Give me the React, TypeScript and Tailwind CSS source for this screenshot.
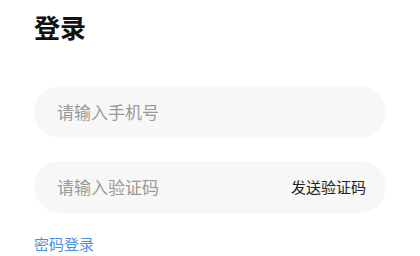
import React from "react";

const FONT = '"Noto Sans CJK SC", "Noto Sans", sans-serif';

export default function App() {
  return (
    <main
      className="min-h-screen bg-white px-[34px] pt-[9px]"
      style={{ fontFamily: FONT }}
    >
      <h1 className="text-[26px] font-bold leading-[36px] text-[#111]">登录</h1>

      <div className="mt-[41px] flex flex-col gap-[23px]">
        <div className="flex h-[52px] items-center rounded-full bg-[#f7f7f7] px-[23px]">
          <input
            className="w-full bg-transparent text-[17px] text-[#333] outline-none placeholder:text-[#9a9a9a]"
            placeholder="请输入手机号"
          />
        </div>
        <div className="flex h-[52px] items-center rounded-full bg-[#f7f7f7] pl-[23px] pr-[20px]">
          <input
            className="min-w-0 flex-1 bg-transparent text-[17px] text-[#333] outline-none placeholder:text-[#9a9a9a]"
            placeholder="请输入验证码"
          />
          <button className="shrink-0 text-[15px] text-[#222]">发送验证码</button>
        </div>
      </div>

      <a className="mt-[21px] block text-[15px] leading-[20px] text-[#4a90e2]">密码登录</a>
    </main>
  );
}
